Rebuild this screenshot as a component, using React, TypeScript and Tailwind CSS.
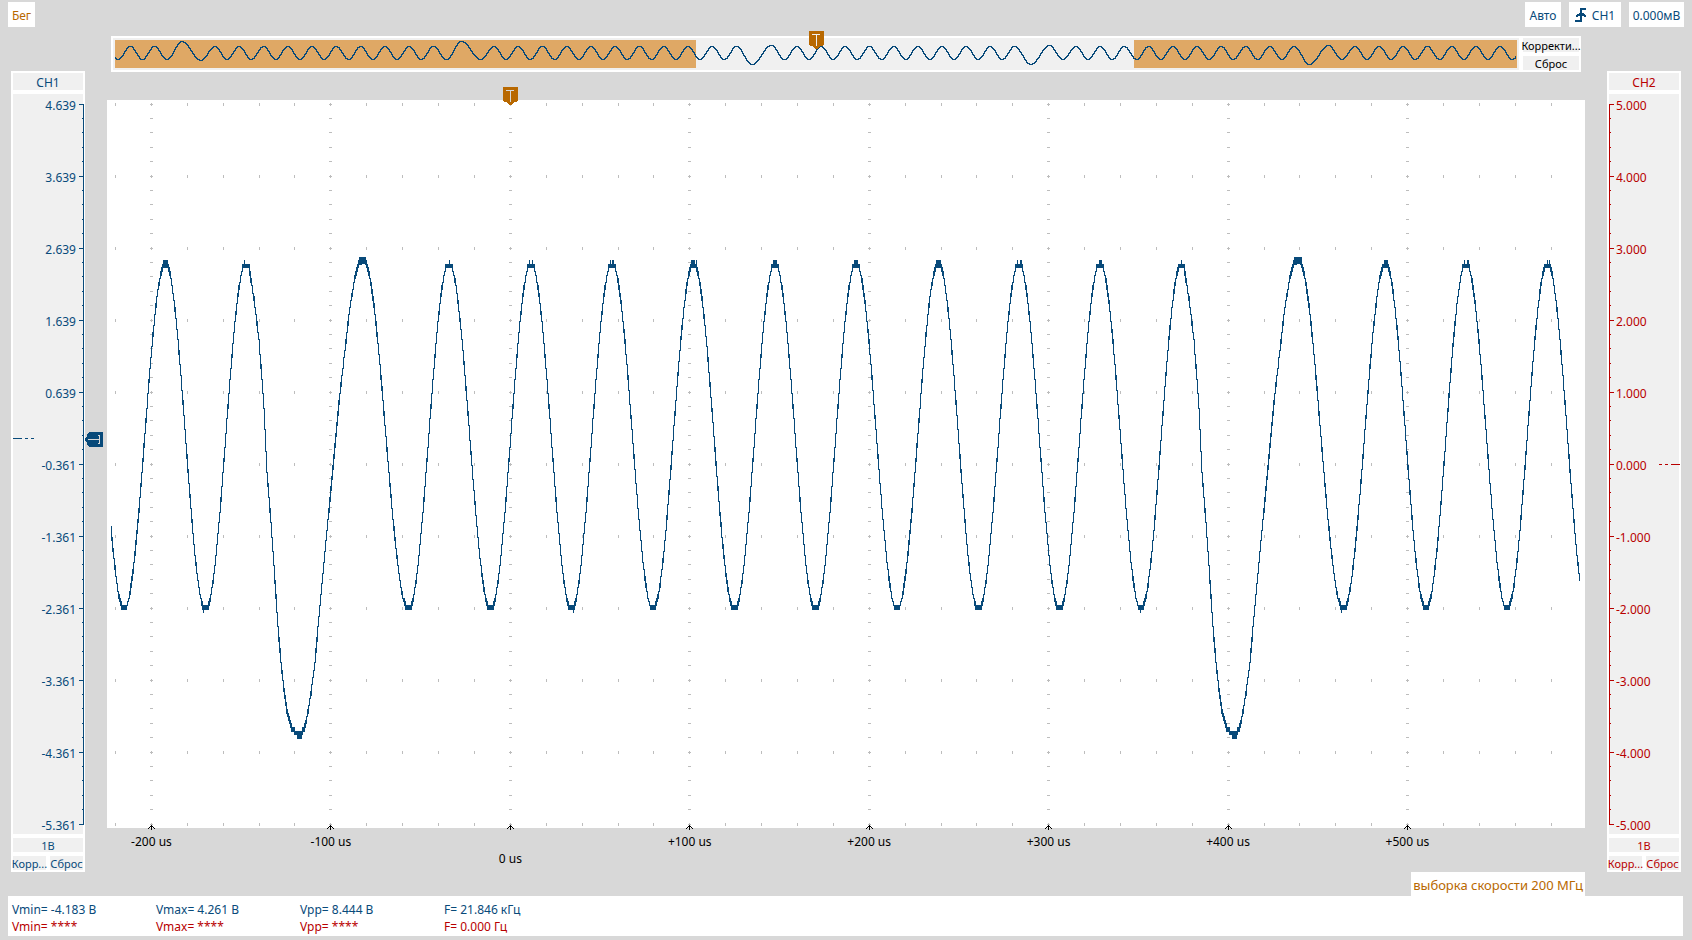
import React from 'react';

const BLUE = '#084a7a';
const RED = '#b80000';

type Point = [number, number];

// Eases between turning points, which is close enough to a sine for the trace
const easeAt = (pts: Point[], x: number) => {
  let i = 0;
  while (i < pts.length - 2 && x > pts[i + 1][0]) i++;
  const [x0, y0] = pts[i];
  const [x1, y1] = pts[i + 1];
  const t = (x - x0) / (x1 - x0);
  return y0 + ((y1 - y0) * (1 - Math.cos(Math.PI * t))) / 2;
};

const lineAt = (pts: Point[], x: number) => {
  let i = 0;
  while (i < pts.length - 2 && x > pts[i + 1][0]) i++;
  const [x0, y0] = pts[i];
  const [x1, y1] = pts[i + 1];
  return y0 + ((y1 - y0) * (x - x0)) / (x1 - x0);
};

/* ---- main trace ---- */

const PLOT_W = 1478;
const PLOT_H = 728;
const HI = 163;
const LO = 510;
const TOP = 158;
const DEEP = 633;

const turns: Point[] = [
  [-23, HI], [17, LO], [58.5, HI], [98.5, LO], [139, HI], [192, DEEP], [256, TOP], [301.5, LO],
  [342, HI], [383.5, LO], [424, HI], [464.5, LO], [505, HI], [546, LO], [586.5, HI], [627.5, LO],
  [668, HI], [708.5, LO], [749, HI], [790, LO], [831.5, HI], [871.5, LO], [912, HI], [952.5, LO],
  [993, HI], [1034, LO], [1074.5, HI], [1127, DEEP], [1191, TOP], [1236.5, LO], [1278.5, HI],
  [1319, LO], [1359, HI], [1400, LO], [1440.5, HI], [1480.5, LO],
];

// offsets from the bottom of the long pulse
const pulse: Point[] = [
  [-53, 166], [-49, 174], [-45, 199], [-40, 240], [-35, 307], [-32, 373], [-28, 423], [-25, 467], [-21, 527], [-18, 563],
  [-15, 590], [-12, 611], [-8, 627], [-4, 632], [0, 633], [3, 632], [6, 627], [9, 612], [12, 593], [16, 563],
  [19, 527], [23, 483], [27, 440], [31, 400], [35, 357], [40, 303], [46, 250], [51, 207], [56, 177], [60, 163], [64, 159],
];

const traceAt = (x: number) => {
  for (const c of [192, 1127]) {
    if (x > c - 50 && x < c + 64) return lineAt(pulse, x - c);
  }
  const y = Math.min(easeAt(turns, x), 507);
  const onWidePeak = Math.abs(x - 256) < 20 || Math.abs(x - 1191) < 20;
  return Math.max(y, onWidePeak ? 160 : 166);
};

const STEP = 3.59;
const quantize = (y: number) => 164.4 + STEP * Math.round((y - 164.4) / STEP);

// [from, to, top, bottom]
const spikes: number[][] = [
  [56, 60, 160, 168], [137, 137, 160, 168], [252, 258, 157, 164], [342, 342, 160, 168], [422, 422, 160, 168],
  [425, 425, 160, 168], [503, 503, 160, 168], [505, 506, 160, 168], [584, 587, 160, 168], [589, 589, 160, 168],
  [666, 669, 160, 168], [747, 750, 160, 168], [829, 833, 160, 168], [910, 910, 160, 168], [913, 914, 160, 168],
  [992, 994, 160, 168], [1074, 1074, 160, 168], [1187, 1194, 157, 164], [1277, 1280, 160, 168],
  [1357, 1357, 160, 168], [1360, 1361, 160, 168], [1440, 1440, 160, 168], [1442, 1442, 160, 168],
  [96, 96, 505, 513], [466, 466, 505, 513], [1033, 1033, 505, 513], [1234, 1234, 505, 513],
  [190, 194, 631, 639], [1125, 1129, 631, 639],
];

const tracePath = () => {
  let d = '';
  for (let x = 4; x <= 1472; x++) {
    const a = traceAt(x);
    const b = traceAt(x + 1);
    const spread = Math.abs(a - b) > 4 ? 0.7 : 1.7;
    const top = Math.floor(quantize(Math.min(a, b) - spread));
    const bottom = Math.floor(quantize(Math.max(a, b) + spread)) + 1;
    d += `M${x + 0.5} ${top}V${bottom}`;
  }
  for (const [from, to, top, bottom] of spikes) {
    for (let x = from; x <= to; x++) d += `M${x + 0.5} ${top}V${bottom}`;
  }
  return d;
};

/* ---- graticule ---- */

const colX = (k: number) => Math.floor(44.43 + 35.89 * k);
const rowY = (k: number) => Math.floor(4 + 14.4 * k);

const gridPath = () => {
  let d = '';
  for (let c = -1; c <= 39; c++) {
    for (let r = 0; r <= 50; r += 5) d += `M${colX(c) + 0.5} ${rowY(r) - 1}v3`;
    if (c % 5 === 0) for (let r = 0; r <= 50; r++) d += `M${colX(c) - 1} ${rowY(r) + 0.5}h3`;
  }
  return d;
};

/* ---- overview trace ---- */

const run = (from: number, to: number, count: number): Point[] => {
  const out: Point[] = [];
  const gap = (to - from) / (count - 1);
  for (let i = 0; i < count; i++) {
    out.push([from + gap * i, 8]);
    if (i < count - 1) out.push([from + gap * (i + 0.5), 21]);
  }
  return out;
};

const overviewTurns: Point[] = [
  [-7, 8], [5, 21], ...run(17.5, 41.5, 2), [54, 21], [69, 3], [88, 22],
  ...run(102, 320.5, 10), [333.5, 21], [348.5, 3], [368, 21],
  ...run(381, 623.5, 11), [639, 26], [658.5, 7], [671.5, 21],
  ...run(684, 901.5, 10), [918, 26], [936.5, 7], [950, 21],
  ...run(963, 1181, 10), [1196.5, 26], [1215.5, 7], [1229, 21],
  ...run(1242, 1387, 7), [1399.5, 21], [1411, 8],
];

const overviewPath = () => {
  let d = '';
  for (let x = 2; x < 1403; x++) {
    const a = Math.round(easeAt(overviewTurns, x));
    const b = Math.round(easeAt(overviewTurns, x + 1));
    d += `M${x + 0.5} ${Math.min(a, b)}V${Math.max(a, b) + 1}`;
  }
  return d;
};

const TriggerFlag = ({ ink, className }: { ink: string; className: string }) => (
  <svg className={className} width="15" height="18" viewBox="0 0 15 18" shapeRendering="crispEdges">
    <path d="M0 0h15v14l-2 1h-1l-4 3h-1l-4-3h-1l-2-1z" fill="#b86800" />
    <path d="M3 3.5h8M7.5 4v11" stroke={ink} fill="none" />
  </svg>
);

const timeLabels = ['-200 us', '-100 us', '0 us', '+100 us', '+200 us', '+300 us', '+400 us', '+500 us'];

const measures = [
  ['Vmin= -4.183 В', 'Vmin= ****'],
  ['Vmax= 4.261 В', 'Vmax= ****'],
  ['Vpp= 8.444 В', 'Vpp= ****'],
  ['F= 21.846 кГц', 'F= 0.000 Гц'],
];

const axisTicks = (major: number, minor: number) => {
  let d = '';
  for (let r = 0; r <= 50; r++) {
    const len = r % 5 === 0 ? major : minor;
    d += `M0 ${rowY(r) - 3.5}h${len}`;
  }
  return d;
};

interface ChannelProps {
  name: string;
  labels: string[];
  side: 'left' | 'right';
}

const Channel: React.FC<ChannelProps> = ({ name, labels, side }) => {
  const left = side === 'left';
  const color = left ? BLUE : RED;
  return (
    <section className={`mt-[44px] mb-6 w-[74px] shrink-0 flex flex-col gap-1 bg-white p-0.5 ${left ? 'text-[#084a7a]' : 'text-[#b80000]'}`}>
      <button className="h-[17px] bg-[#f0f0f0] flex items-center justify-center pt-0.5 leading-4">{name}</button>
      <div className="relative flex-1 bg-[#f0f0f0] pt-1">
        <div className={`h-full flex flex-col justify-between ${left ? 'items-end pr-[7px]' : 'items-start pl-[7px]'}`}>
          {labels.map(l => <span key={l} className="leading-4">{l}</span>)}
        </div>
        <svg className={`absolute top-[10px] bottom-[9px] w-[5px] h-[calc(100%-19px)] ${left ? '-right-px -scale-x-100' : 'left-0'}`} viewBox="0 0 5 721" preserveAspectRatio="none" shapeRendering="crispEdges">
          <path d={`M0.5 0v721${axisTicks(5, 2)}`} stroke={color} fill="none" />
        </svg>
        <svg className={`absolute w-[21px] h-px ${left ? 'left-0 top-[46.5%]' : 'right-[-1px] top-1/2 -scale-x-100'}`} viewBox="0 0 21 1" shapeRendering="crispEdges">
          <path d="M0 0.5h9M12 0.5h3M18 0.5h3" stroke={color} />
        </svg>
      </div>
      <button className="h-[14px] bg-[#f0f0f0] flex justify-center text-[11px] leading-4">1В</button>
      <div className="h-[14px] flex gap-1 text-[11px] leading-4">
        <button className="w-0 flex-1 bg-[#f0f0f0] flex justify-center whitespace-nowrap">Корр...</button>
        <button className="w-0 flex-1 bg-[#f0f0f0] flex justify-center whitespace-nowrap">Сброс</button>
      </div>
    </section>
  );
};

const ch1Labels = ['4.639', '3.639', '2.639', '1.639', '0.639', '-0.361', '-1.361', '-2.361', '-3.361', '-4.361', '-5.361'];
const ch2Labels = ['5.000', '4.000', '3.000', '2.000', '1.000', '0.000', '-1.000', '-2.000', '-3.000', '-4.000', '-5.000'];

const App: React.FC = () => {
  return (
    <div className="min-h-screen flex flex-col bg-[#d8d8d8] pb-1 font-['Noto_Sans',sans-serif] text-[12px] text-[#084a7a]">
      <header className="flex justify-between px-2 pt-0.5">
        <button className="h-[25px] w-[27px] bg-white pt-0.5 text-[#b86800]">Бег</button>
        <div className="flex gap-2">
          <button className="h-[25px] w-9 bg-white pt-0.5">Авто</button>
          <button className="h-[25px] w-[52px] bg-white flex items-center justify-center gap-1.5">
            <svg width="11" height="14" viewBox="0 0 11 14" shapeRendering="crispEdges">
              <path d="M0 13h7M6 0v14M5 1h6" stroke={BLUE} strokeWidth="2" fill="none" />
              <path d="M5 4h2v1h2v1h1v1h1v2h-2v-1h-6v1h-2v-2h1v-1h2v-1h1z" fill={BLUE} />
            </svg>
            <span className="pt-0.5">CH1</span>
          </button>
          <button className="h-[25px] w-[55px] bg-white pt-0.5">0.000мВ</button>
        </div>
      </header>

      <main className="flex-1 flex gap-[22px] px-[11px]">
        <Channel name="CH1" labels={ch1Labels} side="left" />

        <div className="min-w-0 flex-1 flex flex-col">
          <div className="relative mx-1 mt-[9px] h-9 flex gap-1 bg-white p-0.5">
            <svg className="min-w-0 flex-1 h-8 bg-[#f0f0f0]" viewBox="0 0 1406 32" preserveAspectRatio="none" shapeRendering="crispEdges">
              <rect x="2" y="2" width="581" height="28" fill="#dfa865" />
              <rect x="1021" y="2" width="383" height="28" fill="#dfa865" />
              <path d={overviewPath()} stroke={BLUE} fill="none" />
            </svg>
            <div className="w-14 shrink-0 flex flex-col gap-1 text-[11px] leading-4 text-black">
              <button className="h-[14px] bg-[#f0f0f0] flex justify-center whitespace-nowrap">Корректи...</button>
              <button className="h-[14px] bg-[#f0f0f0] flex justify-center whitespace-nowrap">Сброс</button>
            </div>
            <TriggerFlag ink="#f0f0f0" className="absolute left-[47.5%] -top-[5px]" />
          </div>

          <div className="relative mt-7 flex-1 min-h-[400px] bg-white">
            <svg className="absolute inset-0 w-full h-full overflow-visible" viewBox={`0 0 ${PLOT_W} ${PLOT_H}`} preserveAspectRatio="none" shapeRendering="crispEdges">
              <path d={gridPath()} stroke="#bdbdbd" fill="none" />
              <path d={tracePath()} stroke={BLUE} fill="none" />
              {timeLabels.map((t, i) => (
                <path key={t} transform={`translate(${colX(i * 5)} 725)`} d="M0 0h1v1h1v1h1v1h1v1h-1v-1h-1v-1h-1v3h-1v-3h-1v1h-1v1h-1v-1h1v-1h1v-1h1z" fill="#000" />
              ))}
            </svg>
            <TriggerFlag ink="#d8d8d8" className="absolute left-[26.8%] -top-[13px]" />
            <svg className="absolute -left-[22px] top-[45.6%]" width="18" height="15" viewBox="0 0 18 15" shapeRendering="crispEdges">
              <path d="M18 0H4L3 2H2v2L0 7v1l2 3v2h1l1 2h14z" fill={BLUE} />
              <path d="M3 7.5h11M14.5 3v9M13 3.5h2M13 11.5h2" stroke="#d8d8d8" fill="none" />
            </svg>
          </div>

          <div className="h-11 ml-[-3.06%] flex pt-[5px] leading-[17px] text-black">
            {timeLabels.map(t => <span key={t} className={`w-[11.78%] shrink-0 text-center ${t === '0 us' ? 'pt-[17px]' : ''}`}>{t}</span>)}
          </div>
          <div className="h-6 self-end bg-white px-0.5 pt-px leading-6 text-[13px] text-[#b86800]">выборка скорости 200 МГц</div>
        </div>

        <Channel name="CH2" labels={ch2Labels} side="right" />
      </main>

      <footer className="ml-2 mr-[9px] bg-white pl-1 pt-[5px] pb-px flex leading-[17px]">
        {measures.map(([a, b]) => (
          <div key={a} className="w-36">
            <p>{a}</p>
            <p className="text-[#b80000]">{b}</p>
          </div>
        ))}
      </footer>
    </div>
  );
};

export default App;
